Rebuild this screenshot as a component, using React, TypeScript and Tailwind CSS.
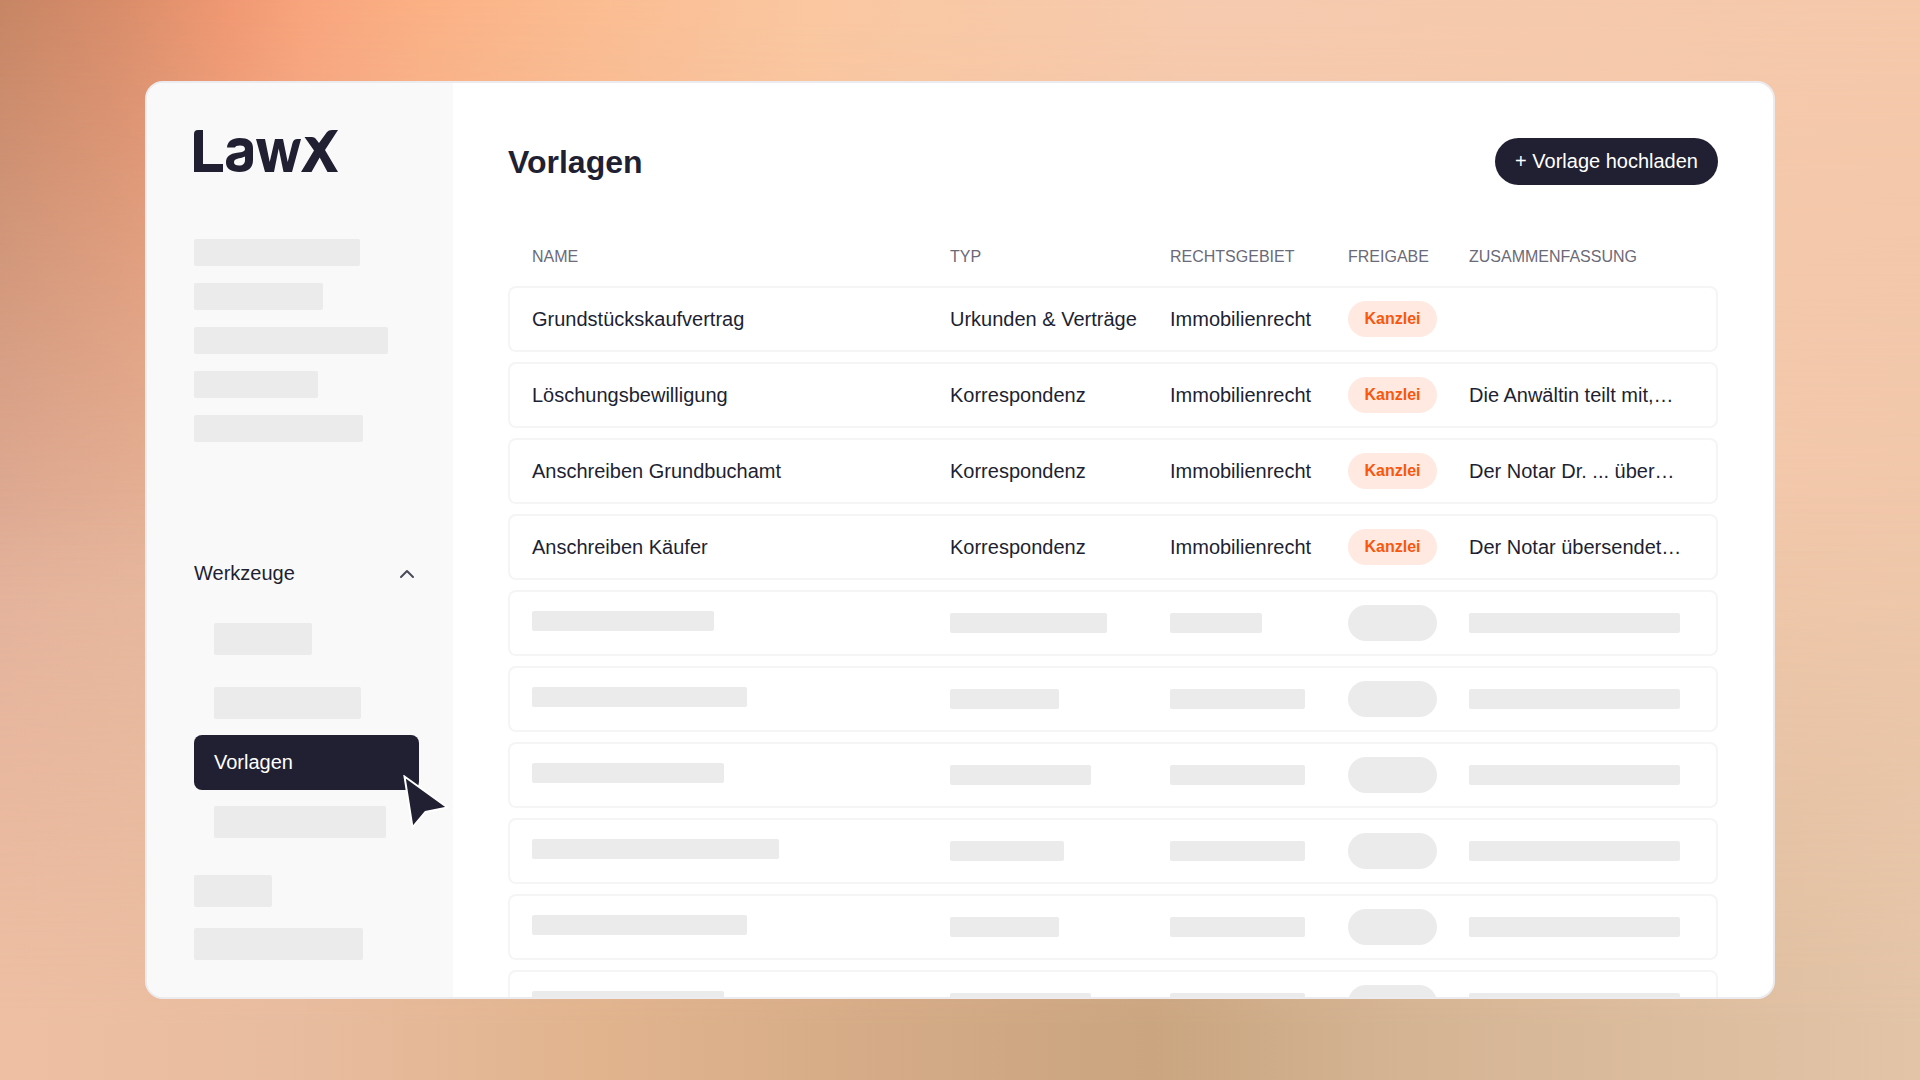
import { ChevronUp } from "lucide-react";

const MENU_BARS = ["w-[166px]", "w-[129px]", "w-[194px]", "w-[124px]", "w-[169px]"];

const TEMPLATES = [
  { name: "Grundstückskaufvertrag", type: "Urkunden & Verträge", summary: "" },
  { name: "Löschungsbewilligung", type: "Korrespondenz", summary: "Die Anwältin teilt mit,…" },
  { name: "Anschreiben Grundbuchamt", type: "Korrespondenz", summary: "Der Notar Dr. ... über…" },
  { name: "Anschreiben Käufer", type: "Korrespondenz", summary: "Der Notar übersendet…" },
];

const PLACEHOLDERS = [
  { name: "w-[182px]", type: "w-[157px]", area: "w-[92px]" },
  { name: "w-[215px]", type: "w-[109px]", area: "w-[135px]" },
  { name: "w-[192px]", type: "w-[141px]", area: "w-[135px]" },
  { name: "w-[247px]", type: "w-[114px]", area: "w-[135px]" },
  { name: "w-[215px]", type: "w-[109px]", area: "w-[135px]" },
  { name: "w-[192px]", type: "w-[141px]", area: "w-[135px]" },
];

const ROW =
  "h-[66px] [&>td]:border-y-2 [&>td]:border-[#f5f5f5] [&>td]:p-0 [&>td:first-child]:rounded-l-lg [&>td:first-child]:border-l-2 [&>td:first-child]:pl-[22px] [&>td:last-child]:rounded-r-lg [&>td:last-child]:border-r-2";

function Bar({ className }: { className: string }) {
  return <div className={`rounded-xs bg-[#ebebeb] ${className}`} />;
}

function Logo() {
  return (
    <svg viewBox="0 0 144 42" className="h-[42px] w-36" fill="#211f32" role="img" aria-label="LawX">
      <path d="M4 0H9V34H29V42H0V4Q0 0 4 0Z" />
      <path
        fillRule="evenodd"
        d="M33 17.500C33.500 11.500 38 8 45.500 8C54 8 59 11 59 18V30C59 38 54 42 45.500 42C37 42 32 38.500 32 32.500C32 26.500 36 23.700 43 22.800C48.500 22 51 21.500 51 19C51 16.500 49 15.500 46 15.500C43 15.500 41.300 16.300 41 17.500ZM51 26.500C49.500 27.300 47.500 27.700 45 28.300C41.500 29 40 30.200 40 32.200C40 34.500 42 35.500 45 35.500C49 35.500 51 33.500 51 30Z"
      />
      <path d="M62 9H71L75.700 32L81 9H89L93.700 32L98.500 13Q99.500 9 103.500 9H107L98 42H89.500L84.700 18.500L80 42H71Z" />
      <path d="M110.500 7H118Q120.500 7 121.500 8.500L125 13L133 2Q134.500 0 138 0H144L131 20L144 42H133.500L125.700 27.500L117.500 42H107L120 20.500Z" />
    </svg>
  );
}

function Sidebar() {
  return (
    <aside className="flex w-[306px] shrink-0 flex-col bg-[#f9f9f9] pt-[47px] pr-[34px] pl-[47px]">
      <Logo />
      <div className="mt-[67px] flex flex-col gap-[17px]">
        {MENU_BARS.map((w) => (
          <Bar key={w} className={`h-[27px] ${w}`} />
        ))}
      </div>
      <nav className="mt-[116px]">
        <button type="button" aria-expanded="true" className="flex h-[31px] w-full items-center justify-between">
          Werkzeuge
          <ChevronUp className="h-6 w-6 text-[#4b4a5a]" />
        </button>
        <ul className="mt-[34px]">
          <li className="pl-5">
            <Bar className="h-8 w-[98px]" />
          </li>
          <li className="mt-8 pl-5">
            <Bar className="h-8 w-[147px]" />
          </li>
          <li className="relative mt-4">
            <a href="#vorlagen" aria-current="page" className="flex h-[55px] items-center rounded-lg bg-[#211f32] px-5 text-white">
              Vorlagen
            </a>
            <svg viewBox="0 0 46 56" className="absolute -right-[30px] -bottom-[41px] z-10 h-14 w-[46px]" aria-hidden="true">
              <path
                d="M1.500 1.500L44.500 32.500L22.500 37L9.500 52.500Z"
                fill="#211f32"
                stroke="#fff"
                strokeWidth="2"
              />
            </svg>
          </li>
          <li className="mt-4 pl-5">
            <Bar className="h-8 w-[172px]" />
          </li>
        </ul>
      </nav>
      <Bar className="mt-[37px] h-8 w-[78px] shrink-0" />
      <Bar className="mt-[21px] h-8 w-[169px] shrink-0" />
    </aside>
  );
}

function TemplateTable() {
  return (
    <table className="mt-[43px] w-full table-fixed border-separate border-spacing-x-0 border-spacing-y-[10px] text-left leading-7 whitespace-nowrap">
      <colgroup>
        <col />
        <col className="w-[220px]" />
        <col className="w-[178px]" />
        <col className="w-[121px]" />
        <col className="w-[249px]" />
      </colgroup>
      <thead>
        <tr className="h-[38px] text-base text-[#6b6a78] uppercase [&>th]:p-0 [&>th]:font-normal">
          <th scope="col">
            <span className="pl-6">Name</span>
          </th>
          <th scope="col">Typ</th>
          <th scope="col">Rechtsgebiet</th>
          <th scope="col">Freigabe</th>
          <th scope="col">Zusammenfassung</th>
        </tr>
      </thead>
      <tbody>
        {TEMPLATES.map((t) => (
          <tr key={t.name} className={ROW}>
            <td>{t.name}</td>
            <td>{t.type}</td>
            <td>Immobilienrecht</td>
            <td>
              <span className="flex h-9 w-[89px] items-center justify-center rounded-full bg-[#ffe9e1] text-base font-bold text-[#f9560e]">
                Kanzlei
              </span>
            </td>
            <td>{t.summary}</td>
          </tr>
        ))}
        {PLACEHOLDERS.map((p, i) => (
          <tr key={i} className={ROW}>
            <td>
              <Bar className={`mb-1 h-5 ${p.name}`} />
            </td>
            <td>
              <Bar className={`h-5 ${p.type}`} />
            </td>
            <td>
              <Bar className={`h-5 ${p.area}`} />
            </td>
            <td>
              <div className="h-9 w-[89px] rounded-full bg-[#ebebeb]" />
            </td>
            <td>
              <Bar className="h-5 w-[211px]" />
            </td>
          </tr>
        ))}
      </tbody>
    </table>
  );
}

export default function App() {
  return (
    <div className="relative isolate flex h-screen bg-[linear-gradient(to_right,#e2b09a_0%,#e6b69c_8%,#efc0a0_50%,#f3c8ab_92%,#f1c8ab_100%)] px-[145px] py-[81px] font-['Liberation_Sans',Arial,sans-serif] text-xl leading-[29px] text-[#211f32]">
      <div className="absolute inset-0 -z-10 bg-[linear-gradient(to_right,#c68564_0%,#d88c69_6%,#f09872_12%,#f8a47c_16%,#fbb084_22%,#fbbb90_30%,#fac7a0_42%,#f6caae_62%,#f5c8aa_100%)] mask-[linear-gradient(to_bottom,black_0%,transparent_55%)]" />
      <div className="absolute inset-0 -z-10 bg-[linear-gradient(to_right,#eebfa3_0%,#e8bc9f_15%,#e1b48e_31%,#d4ab86_46%,#caa580_60%,#d3b392_72%,#dcbd9e_88%,#e3c4a7_100%)] mask-[linear-gradient(to_bottom,transparent_45%,black_95%)]" />
      <div className="flex min-w-0 flex-1 overflow-hidden rounded-[18px] border-2 border-[#ececf0] bg-white">
        <Sidebar />
        <main className="min-w-0 flex-1 px-[55px] pt-[55px]">
          <header className="flex items-center justify-between">
            <h1 className="text-[32px] leading-8 font-bold">Vorlagen</h1>
            <button type="button" className="h-[47px] rounded-full bg-[#211f32] px-5 text-white">
              + Vorlage hochladen
            </button>
          </header>
          <TemplateTable />
        </main>
      </div>
    </div>
  );
}
